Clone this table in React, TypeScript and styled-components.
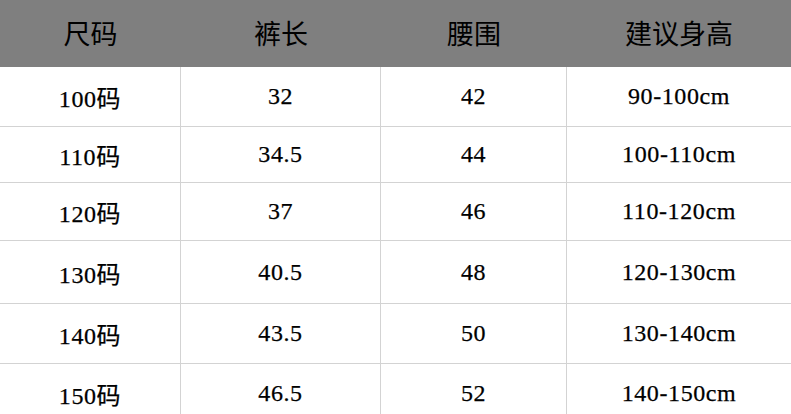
import React from "react";
import styled, { createGlobalStyle } from "styled-components";

const rows = [
  { height: 60, cells: ["100码", "32", "42", "90-100cm"] },
  { height: 56, cells: ["110码", "34.5", "44", "100-110cm"] },
  { height: 58, cells: ["120码", "37", "46", "110-120cm"] },
  { height: 63, cells: ["130码", "40.5", "48", "120-130cm"] },
  { height: 60, cells: ["140码", "43.5", "50", "130-140cm"] },
  { height: 60, cells: ["150码", "46.5", "52", "140-150cm"] },
];

const headers = ["尺码", "裤长", "腰围", "建议身高"];
const widths = [181, 200, 186, 224];

const App = () => {
  return (
    <>
      <GlobalStyle />
      <Table>
        <Header>
          {headers.map((h, i) => (
            <HeadCell key={h} width={widths[i]}>
              {h}
            </HeadCell>
          ))}
        </Header>
        {rows.map((row, r) => (
          <Row key={r} height={row.height}>
            {row.cells.map((c, i) => (
              <Cell key={i} width={widths[i]} last={i === row.cells.length - 1}>
                {c}
              </Cell>
            ))}
          </Row>
        ))}
      </Table>
    </>
  );
};

export default App;

const GlobalStyle = createGlobalStyle`
  html, body {
    margin: 0;
    padding: 0;
    background: #fff;
    overflow: hidden;
  }
`;

const Table = styled.div`
  width: 791px;
  height: 414px;
  overflow: hidden;
  font-family: "Liberation Serif", "Noto Sans CJK SC", serif;
  color: #000;
`;

const Header = styled.div`
  display: flex;
  height: 67px;
  background: #7f7f7f;
`;

const HeadCell = styled.div<{ width: number }>`
  width: ${(p) => p.width}px;
  flex-shrink: 0;
  display: flex;
  align-items: center;
  justify-content: center;
  font-size: 27px;
  padding-bottom: 2px;
  box-sizing: border-box;
`;

const Row = styled.div<{ height: number }>`
  display: flex;
  height: ${(p) => p.height}px;
  border-bottom: 1px solid #d3d3d3;
  box-sizing: border-box;
`;

const Cell = styled.div<{ width: number; last?: boolean }>`
  width: ${(p) => p.width}px;
  flex-shrink: 0;
  display: flex;
  align-items: center;
  justify-content: center;
  font-size: 24px;
  letter-spacing: 0.6px;
  -webkit-text-stroke: 0.25px #000;
  box-sizing: border-box;
  border-right: ${(p) => (p.last ? "none" : "1px solid #d3d3d3")};
`;
